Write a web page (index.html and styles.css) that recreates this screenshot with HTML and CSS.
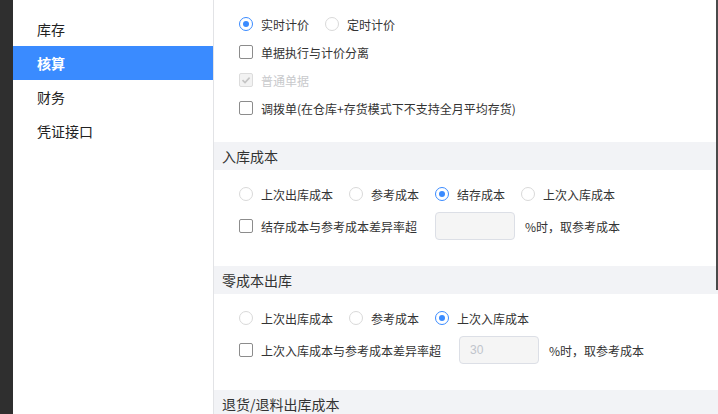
FILE: index.html
```html
<!DOCTYPE html>
<html lang="zh-CN">
<head>
<meta charset="utf-8">
<title>核算设置</title>
<link rel="stylesheet" href="styles.css">
</head>
<body>
<div class="app">
  <div class="rail"></div>
  <nav class="side">
    <div class="nav-item">库存</div>
    <div class="nav-item active">核算</div>
    <div class="nav-item">财务</div>
    <div class="nav-item">凭证接口</div>
  </nav>
  <main class="main">
    <div class="block top">
      <div class="row">
        <label class="opt"><span class="radio on"></span>实时计价</label>
        <label class="opt"><span class="radio"></span>定时计价</label>
      </div>
      <div class="row">
        <label class="opt"><span class="check"></span>单据执行与计价分离</label>
      </div>
      <div class="row">
        <label class="opt disabled"><span class="check checked-dis"><svg viewBox="0 0 14 14" width="14" height="14"><path d="M3.5 7.2 L6 9.6 L10.6 4.6" fill="none" stroke="#c4c4c4" stroke-width="1.6"/></svg></span>普通单据</label>
      </div>
      <div class="row">
        <label class="opt"><span class="check"></span>调拨单(在仓库+存货模式下不支持全月平均存货)</label>
      </div>
    </div>

    <div class="sec-head">入库成本</div>
    <div class="block sec">
      <div class="row">
        <label class="opt"><span class="radio"></span>上次出库成本</label>
        <label class="opt"><span class="radio"></span>参考成本</label>
        <label class="opt"><span class="radio on"></span>结存成本</label>
        <label class="opt"><span class="radio"></span>上次入库成本</label>
      </div>
      <div class="row">
        <label class="opt tight"><span class="check"></span>结存成本与参考成本差异率超</label>
        <span class="box"></span>
        <span class="suffix">%时，取参考成本</span>
      </div>
    </div>

    <div class="sec-head">零成本出库</div>
    <div class="block sec">
      <div class="row">
        <label class="opt"><span class="radio"></span>上次出库成本</label>
        <label class="opt"><span class="radio"></span>参考成本</label>
        <label class="opt"><span class="radio on"></span>上次入库成本</label>
      </div>
      <div class="row">
        <label class="opt tight"><span class="check"></span>上次入库成本与参考成本差异率超</label>
        <span class="box">30</span>
        <span class="suffix">%时，取参考成本</span>
      </div>
    </div>

    <div class="sec-head">退货/退料出库成本</div>
  </main>
  <div class="thumb"></div>
</div>
</body>
</html>
```
FILE: styles.css
```css
* { box-sizing: border-box; }
html, body { margin: 0; padding: 0; }
body {
  font-family: "Noto Sans CJK SC", "Noto Sans", sans-serif;
  color: #333;
  background: #fff;
  width: 718px;
  height: 414px;
  overflow: hidden;
}
.app {
  display: flex;
  height: 414px;
  position: relative;
}
.rail {
  width: 13px;
  flex: none;
  background: #2f2f2f;
}
.side {
  width: 201px;
  flex: none;
  border-right: 1px solid #e2e3e6;
  padding-top: 12px;
  background: #fff;
}
.nav-item {
  height: 34px;
  line-height: 34px;
  padding-left: 24px;
  font-size: 14px;
  color: #222;
}
.nav-item.active {
  background: #3a8bff;
  color: #fff;
  font-weight: bold;
}
.main {
  flex: 1;
  min-width: 0;
}
.block.top {
  padding: 10px 0 20px 25px;
}
.block.sec {
  padding: 10px 0 26px 25px;
  display: flex;
  flex-direction: column;
  gap: 4px;
}
.row {
  display: flex;
  align-items: center;
  height: 28px;
  font-size: 12px;
}
.opt {
  display: flex;
  align-items: center;
  margin-right: 16px;
  color: #333;
  white-space: nowrap;
}
.opt.tight { margin-right: 18px; }
.opt.disabled { color: #c8c9cc; }
.radio {
  width: 14px;
  height: 14px;
  border: 1px solid #d9d9d9;
  border-radius: 50%;
  margin-right: 8px;
  flex: none;
  position: relative;
  background: #fff;
}
.radio.on {
  border-color: #3a8bff;
}
.radio.on::after {
  content: "";
  position: absolute;
  left: 3px;
  top: 3px;
  width: 6px;
  height: 6px;
  border-radius: 50%;
  background: #3a8bff;
}
.check {
  width: 14px;
  height: 14px;
  border: 1px solid #8c8c8c;
  border-radius: 2px;
  margin-right: 8px;
  flex: none;
  background: #fff;
  display: flex;
}
.check.checked-dis {
  border-color: #dcdcdc;
  background: #f2f2f2;
}
.check svg { margin: -1px; }
.box {
  width: 80px;
  height: 28px;
  border: 1px solid #dcdfe6;
  border-radius: 4px;
  background: #f5f5f5;
  color: #c0c4cc;
  font-family: "Liberation Sans", "Noto Sans", sans-serif;
  font-size: 12px;
  line-height: 26px;
  padding-left: 10px;
  margin-right: 10px;
  flex: none;
}
.suffix { color: #333; }
.sec-head {
  height: 28px;
  line-height: 28px;
  background: #f2f3f6;
  padding-left: 8px;
  font-size: 14px;
  color: #333;
}
.thumb {
  position: absolute;
  right: 0;
  top: 0;
  width: 2px;
  height: 290px;
  background: #4a4a4a;
}
```
